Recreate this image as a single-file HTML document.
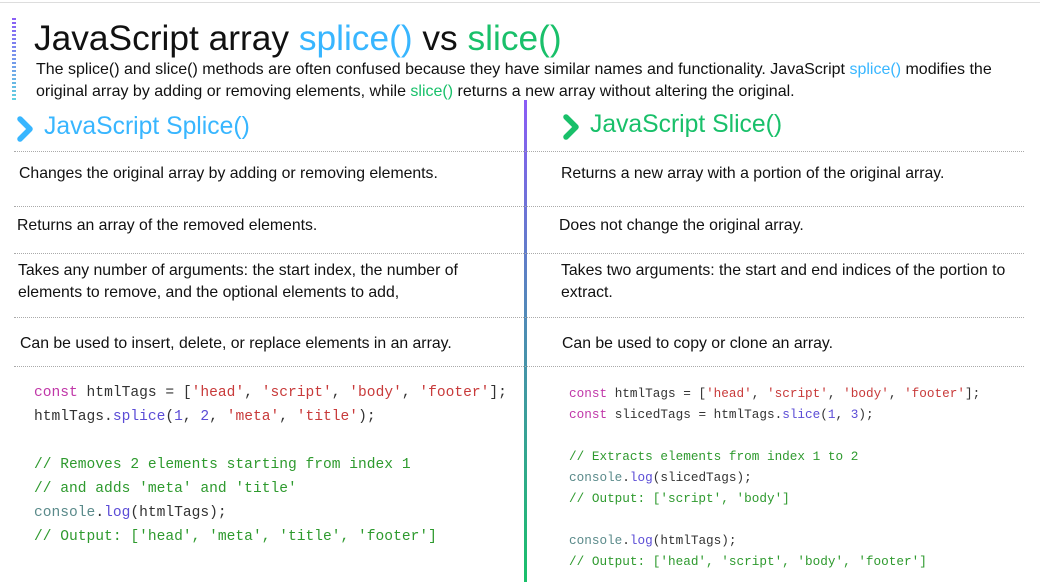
<!DOCTYPE html>
<html><head><meta charset="utf-8"><style>
body{margin:0;width:1040px;height:582px;background:#fff;position:relative;overflow:hidden;font-family:"Liberation Sans",sans-serif;color:#111}
.a{position:absolute;white-space:nowrap}
.hr{position:absolute;left:14px;width:1010px;border-top:1px dotted #aaa;height:0}
.t{font-size:15.8px;line-height:22px}
.code{font-family:"Liberation Mono",monospace;color:#333}
.k{color:#c037a8}.s{color:#c83a3a}.c{color:#2e9a2e}.f{color:#5b4cd6}.g{color:#5a8a8a}
</style></head><body>
<div class="a" style="left:0;top:2px;width:1040px;border-top:1px solid #ddd"></div>
<div class="a" style="left:12px;top:18px;width:4px;height:82px;background:repeating-linear-gradient(to bottom,transparent 0 2px,#fff 2px 4px),linear-gradient(#8b5cf6,#60d0e0)"></div>
<div class="a" style="left:34px;top:18px;font-size:35.3px;line-height:42px">JavaScript array <span style="color:#38b6ff">splice()</span> vs <span style="color:#19c06a">slice()</span></div>
<div class="a" style="left:36px;top:59px;font-size:16px;line-height:22px">The splice() and slice() methods are often confused because they have similar names and functionality. JavaScript <span style="color:#38b6ff">splice()</span> modifies the<br>original array by adding or removing elements, while <span style="color:#19c06a">slice()</span> returns a new array without altering the original.</div>
<div class="a" style="left:524px;top:100px;width:3px;height:482px;background:linear-gradient(#8b5cf6,#4a8fb0 50%,#19c06a)"></div>
<svg class="a" style="left:15px;top:116px" width="22" height="26"><path d="M5 3 L15 13 L5 23" stroke="#38b6ff" stroke-width="5.5" fill="none" stroke-linecap="round" stroke-linejoin="round"/></svg>
<div class="a" style="left:44px;top:113px;font-size:24.7px;color:#38b6ff">JavaScript Splice()</div>
<svg class="a" style="left:561px;top:114px" width="22" height="26"><path d="M5 3 L15 13 L5 23" stroke="#19c06a" stroke-width="5.5" fill="none" stroke-linecap="round" stroke-linejoin="round"/></svg>
<div class="a" style="left:590px;top:111px;font-size:24.7px;color:#19c06a">JavaScript Slice()</div>
<div class="hr" style="top:151px"></div><div class="hr" style="top:206px"></div><div class="hr" style="top:253px"></div><div class="hr" style="top:317px"></div><div class="hr" style="top:366px"></div>
<div class="a t" style="left:19px;top:163px">Changes the original array by adding or removing elements.</div>
<div class="a t" style="left:561px;top:163px">Returns a new array with a portion of the original array.</div>
<div class="a t" style="left:17px;top:215px">Returns an array of the removed elements.</div>
<div class="a t" style="left:559px;top:215px">Does not change the original array.</div>
<div class="a t" style="left:18px;top:260px">Takes any number of arguments: the start index, the number of<br>elements to remove, and the optional elements to add,</div>
<div class="a t" style="left:561px;top:260px">Takes two arguments: the start and end indices of the portion to<br>extract.</div>
<div class="a t" style="left:20px;top:333px">Can be used to insert, delete, or replace elements in an array.</div>
<div class="a t" style="left:562px;top:333px">Can be used to copy or clone an array.</div>
<div class="a code" style="left:34px;top:381px;font-size:14.6px;line-height:24px"><span class="k">const</span> htmlTags = [<span class="s">'head'</span>, <span class="s">'script'</span>, <span class="s">'body'</span>, <span class="s">'footer'</span>];<br>htmlTags.<span class="f">splice</span>(<span class="f">1</span>, <span class="f">2</span>, <span class="s">'meta'</span>, <span class="s">'title'</span>);<br><br><span class="c">// Removes 2 elements starting from index 1</span><br><span class="c">// and adds 'meta' and 'title'</span><br><span class="g">console</span>.<span class="f">log</span>(htmlTags);<br><span class="c">// Output: ['head', 'meta', 'title', 'footer']</span></div>
<div class="a code" style="left:569px;top:383px;font-size:12.7px;line-height:21px"><span class="k">const</span> htmlTags = [<span class="s">'head'</span>, <span class="s">'script'</span>, <span class="s">'body'</span>, <span class="s">'footer'</span>];<br><span class="k">const</span> slicedTags = htmlTags.<span class="f">slice</span>(<span class="f">1</span>, <span class="f">3</span>);<br><br><span class="c">// Extracts elements from index 1 to 2</span><br><span class="g">console</span>.<span class="f">log</span>(slicedTags);<br><span class="c">// Output: ['script', 'body']</span><br><br><span class="g">console</span>.<span class="f">log</span>(htmlTags);<br><span class="c">// Output: ['head', 'script', 'body', 'footer']</span></div>
</body></html>
